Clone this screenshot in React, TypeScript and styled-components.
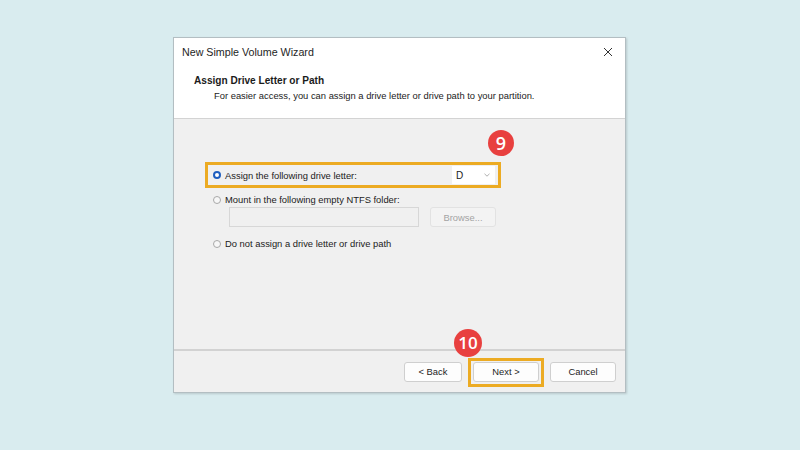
import React from "react";
import styled, { createGlobalStyle } from "styled-components";

const Global = createGlobalStyle`
  html, body { margin: 0; padding: 0; }
  body {
    background: #d9ecef;
    font-family: "Liberation Sans", Arial, sans-serif;
    color: #1b1b1b;
  }
`;

const Page = styled.div`
  width: 800px;
  height: 450px;
  padding-top: 37px;
  box-sizing: border-box;
  display: flex;
  justify-content: center;
  align-items: flex-start;
`;

const Dialog = styled.div`
  width: 453px;
  height: 356px;
  box-sizing: border-box;
  margin-left: -1px;
  border: 1px solid #b3bec2;
  background: #f0f0f0;
  display: flex;
  flex-direction: column;
  box-shadow: 1px 1px 2px rgba(0, 0, 0, 0.15);
`;

const Header = styled.div`
  background: #ffffff;
  border-bottom: 1px solid #d3d3d3;
  padding-bottom: 16px;
`;

const TitleBar = styled.div`
  height: 27px;
  display: flex;
  align-items: center;
  justify-content: space-between;
  padding: 0 10px 0 8px;
`;

const Title = styled.span`
  font-size: 10.7px;
  color: #1e1e1e;
`;

const CloseIcon = styled.svg`
  width: 10px;
  height: 10px;
  margin-right: 2px;
`;

const HeadingBlock = styled.div`
  padding: 9px 0 0 20px;
  display: flex;
  flex-direction: column;
  gap: 2px;
`;

const Heading = styled.div`
  font-size: 10.1px;
  font-weight: bold;
  line-height: 13px;
`;

const Subtitle = styled.div`
  font-size: 9.4px;
  line-height: 13px;
  padding-left: 20px;
`;

const Body = styled.div`
  flex: 1;
  padding: 43px 0 0 31px;
  display: flex;
  flex-direction: column;
  align-items: flex-start;
`;

const OptionRow = styled.div<{ $highlight?: boolean; $gap?: number }>`
  position: relative;
  box-sizing: border-box;
  display: flex;
  align-items: center;
  gap: 4px;
  font-size: 9.4px;
  margin-top: ${(p) => p.$gap ?? 0}px;
  ${(p) =>
    p.$highlight
      ? `
    width: 296px;
    height: 26px;
    border: 3px solid #ecab23;
    padding: 0 3px 0 5px;
  `
      : `
    height: 13px;
    padding-left: 8px;
  `}
`;

const Radio = styled.span<{ $checked?: boolean }>`
  width: 8px;
  height: 8px;
  border-radius: 50%;
  box-sizing: border-box;
  flex: none;
  ${(p) =>
    p.$checked
      ? `
    background: #ffffff;
    border: 2.5px solid #1f5fbf;
  `
      : `
    background: #f7f7f7;
    border: 1px solid #a8a8a8;
  `}
`;

const Label = styled.span`
  flex: 1;
  white-space: nowrap;
`;

const Dropdown = styled.div`
  width: 43px;
  height: 18px;
  background: #ffffff;
  box-sizing: border-box;
  display: flex;
  align-items: center;
  justify-content: space-between;
  padding: 0 5px 0 4px;
  font-size: 10px;
`;

const Chevron = styled.svg`
  width: 6px;
  height: 4px;
`;

const FolderRow = styled.div`
  display: flex;
  gap: 11px;
  padding-left: 24px;
  margin-top: 1px;
`;

const TextBox = styled.div`
  width: 190px;
  height: 20px;
  box-sizing: border-box;
  border: 1px solid #d7d7d7;
  background: #f0f0f0;
`;

const Button = styled.div<{ $disabled?: boolean; $width?: number }>`
  width: ${(p) => p.$width ?? 66}px;
  height: 20px;
  box-sizing: border-box;
  border: 1px solid ${(p) => (p.$disabled ? "#e2e2e2" : "#cfcfcf")};
  border-radius: 3px;
  background: ${(p) => (p.$disabled ? "#f3f3f3" : "#fdfdfd")};
  color: ${(p) => (p.$disabled ? "#a3a3a3" : "#1e1e1e")};
  font-size: 9.4px;
  display: flex;
  align-items: center;
  justify-content: center;
`;

const Footer = styled.div`
  height: 43px;
  box-sizing: border-box;
  border-top: 2px solid #d2d2d2;
  display: flex;
  align-items: center;
  justify-content: flex-end;
  gap: 6px;
  padding: 0 9px 0 0;
`;

const HighlightBox = styled.div`
  position: relative;
  border: 3px solid #ecab23;
  padding: 1px 2px 2px 2px;
  margin-top: 1px;
`;

const Badge = styled.div<{ $size: number; $font: number }>`
  position: absolute;
  width: ${(p) => p.$size}px;
  height: ${(p) => p.$size}px;
  border-radius: 50%;
  background: #e8403f;
  color: #ffffff;
  font-family: "Open Sans", "Liberation Sans", sans-serif;
  font-weight: 600;
  font-size: ${(p) => p.$font}px;
  display: flex;
  align-items: center;
  justify-content: center;
  line-height: 1;
`;

const BadgeNine = styled(Badge)`
  right: -16px;
  top: -35px;
`;

const BadgeTen = styled(Badge)`
  left: -17px;
  top: -32px;
`;

export default function App() {
  return (
    <>
      <Global />
      <Page>
        <Dialog>
          <Header>
            <TitleBar>
              <Title>New Simple Volume Wizard</Title>
              <CloseIcon viewBox="0 0 10 10">
                <path d="M1 1 L9 9 M9 1 L1 9" stroke="#333" strokeWidth="1" fill="none" />
              </CloseIcon>
            </TitleBar>
            <HeadingBlock>
              <Heading>Assign Drive Letter or Path</Heading>
              <Subtitle>
                For easier access, you can assign a drive letter or drive path to your partition.
              </Subtitle>
            </HeadingBlock>
          </Header>
          <Body>
            <OptionRow $highlight>
              <Radio $checked />
              <Label>Assign the following drive letter:</Label>
              <Dropdown>
                <span>D</span>
                <Chevron viewBox="0 0 6 4">
                  <path d="M0.5 0.8 L3 3.2 L5.5 0.8" stroke="#9a9a9a" strokeWidth="0.8" fill="none" />
                </Chevron>
              </Dropdown>
              <BadgeNine $size={26} $font={18}>9</BadgeNine>
            </OptionRow>
            <OptionRow $gap={5}>
              <Radio />
              <Label>Mount in the following empty NTFS folder:</Label>
            </OptionRow>
            <FolderRow>
              <TextBox />
              <Button $disabled>Browse...</Button>
            </FolderRow>
            <OptionRow $gap={10}>
              <Radio />
              <Label>Do not assign a drive letter or drive path</Label>
            </OptionRow>
          </Body>
          <Footer>
            <Button $width={58}>&lt; Back</Button>
            <HighlightBox>
              <Button>Next &gt;</Button>
              <BadgeTen $size={28} $font={17}>10</BadgeTen>
            </HighlightBox>
            <Button>Cancel</Button>
          </Footer>
        </Dialog>
      </Page>
    </>
  );
}
